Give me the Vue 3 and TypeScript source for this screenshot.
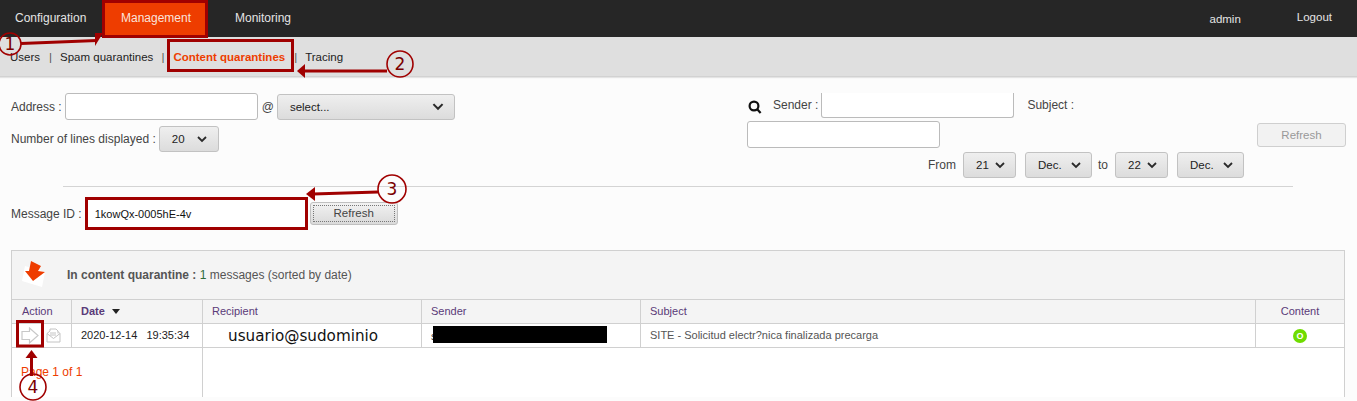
<script setup lang="ts">
const navItems = [
  { label: 'Configuration', cls: 'nav-config' },
  { label: 'Management', cls: 'nav-active' },
  { label: 'Monitoring', cls: 'nav-monitor' },
]
const columns = ['Action', 'Date', 'Recipient', 'Sender', 'Subject', 'Content']
const dates = [
  { label: '21', cls: 'd-day' },
  { label: 'Dec.', cls: 'd-mon' },
]
const datesTo = [
  { label: '22', cls: 'd-day' },
  { label: 'Dec.', cls: 'd-mon' },
]
</script>

<template>
  <div class="page">
    <header class="topbar">
      <nav class="nav">
        <a v-for="n in navItems" :key="n.label" :class="['nav-item', n.cls]">{{ n.label }}</a>
      </nav>
      <div class="user">
        <span class="admin">admin</span>
        <a class="logout">Logout</a>
      </div>
    </header>

    <div class="subnav">
      <a class="sub users">Users</a><span class="sep s1">|</span>
      <a class="sub spam">Spam quarantines</a><span class="sep s2">|</span>
      <a class="sub current">Content quarantines</a><span class="sep s3">|</span>
      <a class="sub tracing">Tracing</a>
    </div>

    <main class="content">
      <section class="filters">
        <div class="left">
          <div class="row-address">
            <label class="lbl">Address :</label>
            <input class="input addr" type="text" />
            <span class="lbl at">@</span>
            <div class="select domain">
              <span>select...</span>
              <svg class="chev chev-wide" viewBox="0 0 10 7"><path d="M1 1l4 4 4-4" /></svg>
            </div>
          </div>
          <div class="row-lines">
            <label class="lbl">Number of lines displayed :</label>
            <div class="select lines">
              <span>20</span>
              <svg class="chev" viewBox="0 0 10 7"><path d="M1 1l4 4 4-4" /></svg>
            </div>
          </div>
        </div>

        <div class="right">
          <div class="row-sender">
            <svg class="search" viewBox="0 0 14 14">
              <circle cx="6" cy="6" r="4.4" />
              <path d="M9 9l3.6 4" />
            </svg>
            <label class="lbl">Sender :</label>
            <input class="input sender" type="text" />
            <label class="lbl subject-lbl">Subject :</label>
          </div>
          <div class="row-subject">
            <input class="input subject" type="text" />
            <button class="btn-disabled" type="button">Refresh</button>
          </div>
          <div class="row-dates">
            <span class="lbl from">From</span>
            <div v-for="d in dates" :key="d.cls" :class="['select', 'date', d.cls]">
              <span>{{ d.label }}</span>
              <svg class="chev" viewBox="0 0 10 7"><path d="M1 1l4 4 4-4" /></svg>
            </div>
            <span class="lbl to">to</span>
            <div v-for="d in datesTo" :key="d.cls" :class="['select', 'date', d.cls]">
              <span>{{ d.label }}</span>
              <svg class="chev" viewBox="0 0 10 7"><path d="M1 1l4 4 4-4" /></svg>
            </div>
          </div>
        </div>
      </section>

      <hr class="rule" />

      <section class="message">
        <label class="lbl msg-lbl">Message ID :</label>
        <input class="input msg" type="text" value="1kowQx-0005hE-4v" />
        <button class="btn-refresh" type="button"><span>Refresh</span></button>
      </section>

      <section class="panel">
        <div class="panel-head">
          <svg class="panel-icon" viewBox="0 0 26 28">
            <path d="M5 5l20 6-3 15-20-6z" fill="#fff" />
            <path d="M11 0l10 5-3 5 7 1-12 9-8-10 4 0z" fill="#ee3d00" />
          </svg>
          <p class="panel-title"><b>In content quarantine :</b> <span class="one">1</span> messages (sorted by date)</p>
        </div>
        <div class="grid">
          <div v-for="c in columns" :key="c" :class="['th', 'th-' + c.toLowerCase()]">
            <span>{{ c }}</span>
            <i v-if="c === 'Date'" class="sort"></i>
          </div>

          <div class="td td-action">
            <svg class="ic-arrow" viewBox="0 0 18 18">
              <path d="M1 4.500h7.500V1l8.500 7.500L8.500 16v-3.500H1z" />
            </svg>
            <svg class="ic-mail" viewBox="0 0 15 15">
              <path d="M1 5.500L4 3V1h6l2 2v2.500M1 5.500V14h13V5.500L12 3.500M1 5.500l6.500 5 6.500-5M4 5h6M4 7h6" />
            </svg>
          </div>
          <div class="td td-date">2020-12-14 &nbsp; 19:35:34</div>
          <div class="td td-rcpt">usuario@sudominio</div>
          <div class="td td-sender"><span class="peek">s</span><span class="redact"></span></div>
          <div class="td td-subject">SITE - Solicitud electr?nica finalizada precarga</div>
          <div class="td td-content"><span class="dot">O</span></div>

          <div class="foot-left">Page 1 of 1</div>
          <div class="foot-right"></div>
        </div>
      </section>
    </main>

    <svg class="notes" width="1357" height="401" viewBox="0 0 1357 401">
      <g fill="none" stroke="#a00000" stroke-width="3">
        <rect x="103.500" y="1.500" width="103" height="35" />
        <rect x="168.500" y="40.500" width="124" height="30" />
        <rect x="86.500" y="198.500" width="220" height="30" />
        <rect x="17.500" y="321.500" width="25" height="24.500" />
        <path d="M21 43.500l76-3" />
        <path d="M387 71h-84" />
        <path d="M378 192l-65 2" />
        <path d="M31.500 376V356" />
      </g>
      <g fill="#a00000">
        <path d="M95 33h8l-8 13z" />
        <path d="M297 71l8-7v14z" />
        <path d="M306 194l9-7v14z" />
        <path d="M31.500 350l6 8h-12z" />
      </g>
      <g fill="none" stroke="#a00000" stroke-width="1.600">
        <circle cx="10" cy="44" r="11" />
        <circle cx="400" cy="64" r="13" />
        <circle cx="392" cy="189" r="14" />
        <circle cx="33" cy="387" r="13" />
      </g>
      <g class="note-num" fill="#7a0000" text-anchor="middle">
        <text x="10" y="50">1</text>
        <text x="400" y="70">2</text>
        <text x="392" y="195">3</text>
        <text x="33" y="393">4</text>
      </g>
    </svg>
  </div>
</template>

<style>
html, body { margin: 0; background: #fcfcfc; }
</style>

<style scoped>
.page {
  position: relative;
  width: 1357px;
  height: 401px;
  overflow: hidden;
  background: #fcfcfc;
  font-family: "Liberation Sans", Arial, sans-serif;
  font-size: 12px;
  color: #444;
}
.topbar {
  height: 37px;
  background: #262626;
  display: flex;
  justify-content: space-between;
  color: #e4e4e4;
}
.nav { display: flex; }
.nav-item { display: flex; align-items: center; height: 37px; padding-bottom: 1px; box-sizing: border-box; }
.nav-config { padding-left: 15px; width: 103px; }
.nav-active { width: 104px; padding-left: 18px; background: #ee3d00; color: #fbe3dc; }
.nav-monitor { padding-left: 28px; }
.user { display: flex; font-size: 11.500px; padding-right: 25px; }
.admin { margin-top: 13px; }
.logout { margin-top: 11px; margin-left: 56px; }

.subnav {
  height: 40px;
  background: #dfdfdf;
  border-bottom: 1px solid #d2d2d2;
  box-shadow: 0 1px 1px #e4e4e4;
  display: flex;
  align-items: flex-start;
  padding: 14px 0 0 10px;
  box-sizing: border-box;
  font-size: 11.500px;
  color: #222;
}
.sub { line-height: 13px; }
.sep { line-height: 13px; color: #555; }
.s1 { margin: 0 8px 0 9px; }
.s2 { margin: 0 9px 0 8px; }
.s3 { margin: 0 8px 0 9px; }
.current { color: #ee3d00; font-weight: 700; }

.content { padding: 16px 11px 0; }
.filters { display: flex; }
.left { width: 736px; flex: none; }
.right { flex: 1; }
.lbl { color: #444; white-space: nowrap; }
.input {
  box-sizing: border-box;
  height: 27px;
  background: #fff;
  border: 1px solid #bbb;
  border-radius: 3px;
  padding: 0 7px;
  font-family: "Liberation Sans", Arial, sans-serif;
  outline: none;
}
.select {
  box-sizing: border-box;
  display: flex;
  align-items: center;
  justify-content: space-between;
  background: linear-gradient(#efefef, #dcdcdc);
  border: 1px solid #c2c2c2;
  border-radius: 3px;
  color: #222;
  font-size: 11.500px;
}
.chev { width: 10px; height: 7px; fill: none; stroke: #2a2a2a; stroke-width: 1.800; }
.chev-wide { width: 12px; height: 8px; }

.row-address { display: flex; align-items: center; height: 27px; }
.addr { width: 193px; margin-left: 3px; }
.at { margin-left: 4px; }
.domain { width: 178px; height: 26px; margin-left: 3px; padding: 0 10px 0 12px; }
.row-lines { display: flex; align-items: center; height: 26px; margin-top: 6px; }
.lines { width: 60px; height: 26px; margin-left: 3px; padding: 0 11px 0 12px; }

.row-sender { display: flex; align-items: center; height: 25px; }
.search { width: 14px; height: 14px; margin: 3px 0 0 1px; fill: none; stroke: #111; stroke-width: 2.200; }
.row-sender .lbl { margin-left: 11px; margin-top: -2px; }
.row-sender .input { height: 25px; margin-left: 3px; }
.row-sender .sender { width: 193px; border-top: none; border-top-left-radius: 0; border-top-right-radius: 0; }
.row-sender .subject-lbl { margin-left: 13px; }
.row-subject { display: flex; align-items: center; justify-content: space-between; margin-top: 3px; }
.subject { width: 193px; }
.btn-disabled {
  width: 89px;
  height: 24px;
  padding: 0;
  background: #f2f2f2;
  border: 1px solid #cfcfcf;
  border-radius: 3px;
  color: #999;
  font-family: inherit;
  font-size: 11.500px;
}
.row-dates { display: flex; align-items: center; justify-content: flex-end; margin-top: 4px; padding-right: 102px; }
.date { height: 26px; padding: 0 10px 0 12px; }
.d-day { width: 53px; }
.d-mon { width: 67px; margin-left: 9px; }
.from { margin-right: 7px; }
.to { margin: 0 7px 0 6px; }

.rule {
  height: 1px;
  border: 0;
  background: #d4d4d4;
  width: 1230px;
  margin: 8px 0 0 52px;
}
.message { display: flex; align-items: center; height: 32px; margin-top: 10px; }
.msg-lbl { padding-top: 1px; }
.msg {
  width: 221px;
  height: 32px;
  margin-left: 4px;
  padding: 1px 0 0 8px;
  color: #111;
  font-size: 11px;
  border-radius: 0;
}
.btn-refresh {
  width: 88px;
  height: 23px;
  margin: 1px 0 0 3px;
  padding: 2px;
  background: linear-gradient(#f2f2f2, #dadada);
  border: 1px solid #c0c0c0;
  border-radius: 3px;
  color: #444;
  font-family: inherit;
  font-size: 11.500px;
}
.btn-refresh span {
  display: block;
  height: 100%;
  line-height: 15px;
  border: 1px dotted #777;
  box-sizing: border-box;
}

.panel {
  box-sizing: border-box;
  height: 147px;
  margin: 21px 1px 0 0;
  border: 1px solid #d0d0d0;
}
.panel-head {
  height: 48px;
  background: #f4f4f4;
  display: flex;
  align-items: center;
}
.panel-icon { width: 26px; height: 28px; margin-left: 8px; flex: none; }
.panel-title { margin: 0 0 0 21px; color: #555; font-size: 12px; }
.panel-title .one { color: #2f6b3a; }
.grid {
  display: grid;
  grid-template-columns: 60px 131px 219px 219px 615px 1fr;
  grid-template-rows: 24px 24px 49px;
  border-top: 1px solid #d0d0d0;
}
.th, .td { box-sizing: border-box; border-right: 1px solid #d0d0d0; border-bottom: 1px solid #d0d0d0; display: flex; align-items: center; }
.th { background: #f4f4f4; color: #5a3a78; font-size: 11px; padding: 0 0 1px 9px; }
.th-action { padding-left: 10px; }
.th-date { font-weight: 700; }
.th-content { border-right: 0; justify-content: center; padding-left: 0; }
.sort { width: 0; height: 0; margin-left: 7px; border: 4px solid transparent; border-top: 5px solid #222; border-bottom: 0; }
.td { background: #fff; font-size: 11px; padding-left: 9px; color: #222; }
.td-action { padding-left: 9px; gap: 7px; }
.ic-arrow { width: 18px; height: 18px; fill: none; stroke: #c8c8c8; stroke-width: 1.200; flex: none; }
.ic-mail { width: 15px; height: 15px; fill: none; stroke: #c4c4c4; stroke-width: 1; flex: none; }
.td-rcpt { padding-left: 25px; font-family: "DejaVu Sans", sans-serif; font-size: 15.200px; color: #111; }
.td-sender { position: relative; }
.peek { color: #333; }
.redact { position: absolute; left: 11px; top: 2px; width: 174px; height: 17px; background: #000; }
.td-date, .td-subject { padding-bottom: 1px; }
.td-subject { color: #555; }
.td-content { border-right: 0; justify-content: center; padding-left: 0; }
.dot {
  width: 14px;
  height: 14px;
  border-radius: 50%;
  background: #6fdc00;
  color: #fff;
  font-size: 9px;
  font-weight: 700;
  text-align: center;
  line-height: 14px;
}
.foot-left {
  grid-column: 1 / 3;
  box-sizing: border-box;
  background: #fff;
  border-right: 1px solid #d0d0d0;
  padding: 17px 0 0 9px;
  color: #ee3d00;
  font-size: 12px;
}
.foot-right { grid-column: 3 / 7; background: #fff; }

.notes { position: absolute; left: 0; top: 0; pointer-events: none; }
.note-num { font-family: "DejaVu Sans", sans-serif; font-size: 17px; }
</style>
